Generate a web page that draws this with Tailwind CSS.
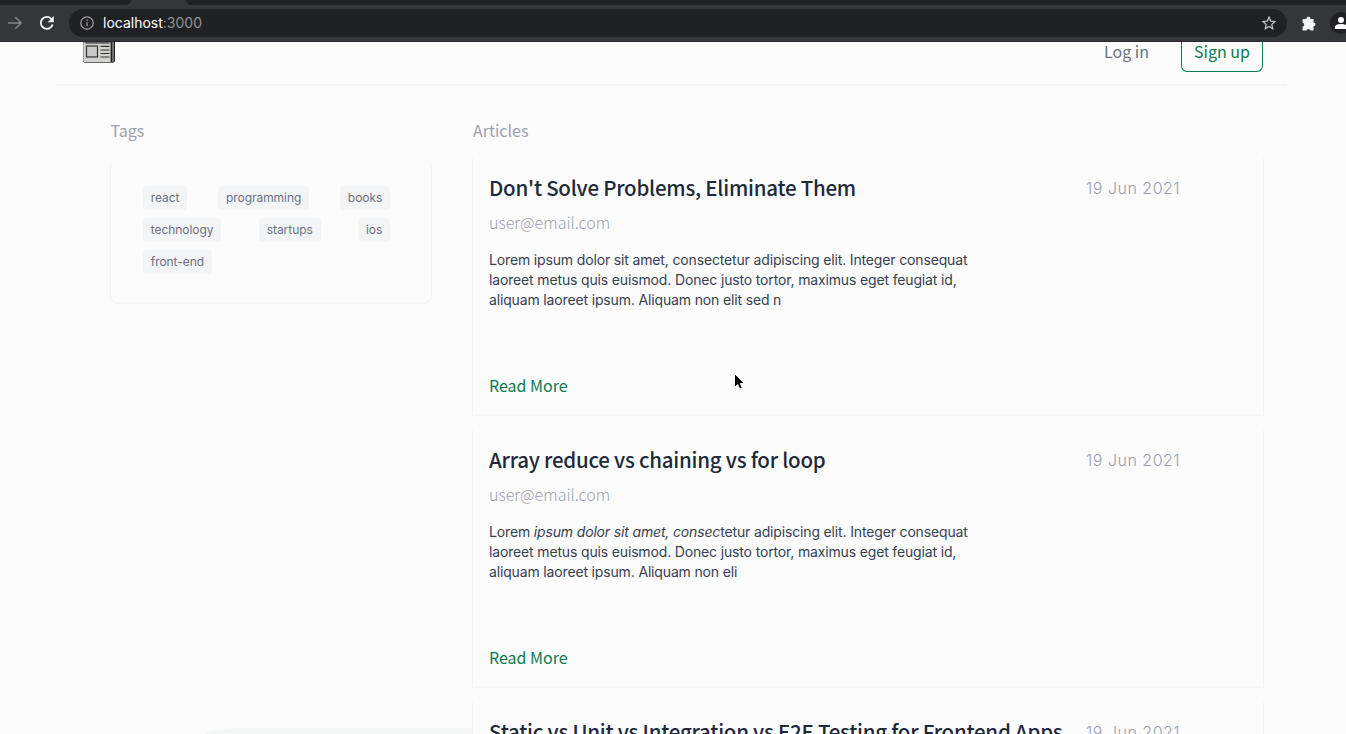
<!DOCTYPE html>
<html lang="en">
<head>
<meta charset="utf-8">
<title>Articles</title>
<script src="https://cdn.jsdelivr.net/npm/@tailwindcss/browser@4"></script>
</head>
<body class="flex h-[734px] w-[1346px] flex-col overflow-hidden bg-[#fcfcfc] font-['Inter',sans-serif]">
<div class="relative flex h-[42px] shrink-0 flex-col border-b border-[#28292c] bg-[#35363a]">
  <div class="flex h-[5px] w-full justify-between">
    <div class="h-full w-[131px] rounded-br-[5px] bg-[#202124]"></div>
    <div class="h-full w-[1160px] rounded-bl-[5px] bg-[#202124]"></div>
  </div>
  <div class="flex h-[36px] items-center">
    <svg class="ml-[7px] size-4 shrink-0" viewBox="0 0 16 16" fill="none" stroke="#85868a" stroke-width="1.5"><path d="M1 8h13M8.3 2.2 14.1 8l-5.8 5.800"/></svg>
    <svg class="ml-[16px] size-4 shrink-0" viewBox="0 0 16 16" fill="none" stroke="#f1f3f4" stroke-width="1.9"><path d="M13.600 9.400A6 6 0 1 1 12.400 4"/><path d="M14.800 1v6.200H8.600z" fill="#f1f3f4" stroke="none"/></svg>
    <div class="ml-[14px] flex h-7 w-[1218px] shrink-0 items-center rounded-full bg-[#202124] pr-[11px] pl-[11px]">
      <svg class="size-[14px]" viewBox="0 0 14 14" fill="none" stroke="#9aa0a6" stroke-width="1.300"><circle cx="7" cy="7" r="6.200"/><path d="M7 6.200v4M7 3.500v1.500"/></svg>
      <div class="ml-[9px] text-[14px] leading-5 text-[#8f9195]"><span class="text-white">localhost</span>:3000</div>
      <svg class="ml-auto size-[14px]" viewBox="0 0 14 14" fill="none" stroke="#c4c7ca" stroke-width="1.200"><path d="m7 1.100 1.700 4 4.300.4-3.200 2.900.9 4.300L7 10.500l-3.700 2.200.9-4.300L1 5.500l4.300-.4z"/></svg>
    </div>
    <svg class="ml-[15px] size-[15px] shrink-0" viewBox="0 0 15 15" fill="#f1f3f4"><path d="M1.500 3h3.100a1.900 1.900 0 1 1 3.700 0h3.200v3.400a1.900 1.900 0 1 1 0 3.800v4.300H8.600a2.200 2.200 0 0 0-4.200 0H.6v-3.700a2.100 2.100 0 0 0 0-4.100V4q0-1 .9-1z"/></svg>
    <div class="ml-[13px] flex size-[22px] shrink-0 items-center justify-center rounded-full bg-[#202124]">
      <svg class="size-3" viewBox="0 0 12 12" fill="#fff"><circle cx="6" cy="3" r="3"/><path d="M0 12v-2q0-3 6-3t6 3v2z"/></svg>
    </div>
  </div>
</div>

<div class="relative h-[692px] w-full shrink-0 overflow-hidden">
  <header class="mx-auto ml-[56px] flex h-[44px] w-[1231px] items-start border-b-2 border-[#f3f4f5] pr-[24px] pl-[27px] font-['Noto_Sans_CJK_SC',sans-serif] text-[16px]">
    <svg class="h-[21px] w-8" viewBox="0 0 32 21"><path d="M28 0h4v19l-2 2h-3z" fill="#777"/><path d="M0 0h28v20.500H1.500L0 19z" fill="#d2d2d0" stroke="#666" stroke-width="1"/><path d="M28.500 0v20" stroke="#222" stroke-width="1.300"/><path d="M31.500 0v19l-1.500 1.500" fill="none" stroke="#222"/><path d="M2.500 1h24" stroke="#444" stroke-width="1.300"/><rect x="3.500" y="4" width="11" height="11" fill="#c9c9c9" stroke="#333" stroke-width="1.200"/><path d="M17.500 4.300h9M17.500 8h9M17.500 11.500h9M17.500 15h9" stroke="#333" stroke-width="1.200"/></svg>
    <span class="-mt-px ml-auto h-5 w-[45px] leading-5 whitespace-nowrap text-gray-500">Log in</span>
    <div class="ml-[32px] flex h-[30px] w-[82px] justify-center rounded-b-[6px] border border-t-0 border-[#0b7a52] leading-[18px] whitespace-nowrap text-[#0b7a52]">Sign up</div>
  </header>

  <div class="flex">
    <aside class="ml-[110px] w-[322px] pt-[32px]">
      <h2 class="h-6 pl-[0.5px] font-['Noto_Sans_CJK_SC',sans-serif] text-[16px] leading-6 text-gray-400">Tags</h2>
      <div class="mt-[18px] h-[144px] rounded-[8px] border border-t-0 border-b-2 border-[#f4f4f5] px-8 pt-[26px] text-[12px] tracking-[-0.05px] text-gray-500">
        <div class="flex w-[247px] flex-col gap-2 leading-6">
          <div class="flex justify-between"><span class="h-6 rounded bg-gray-100 px-[7.75px]">react</span><span class="h-6 rounded bg-gray-100 px-[7.75px]">programming</span><span class="h-6 rounded bg-gray-100 px-[7.75px]">books</span></div>
          <div class="flex justify-between"><span class="h-6 rounded bg-gray-100 px-[7.75px]">technology</span><span class="h-6 rounded bg-gray-100 px-[7.75px]">startups</span><span class="h-6 rounded bg-gray-100 px-[7.75px]">ios</span></div>
          <div class="flex"><span class="h-6 rounded bg-gray-100 px-[7.75px]">front-end</span></div>
        </div>
      </div>
    </aside>
    <main class="ml-[40px] w-[792px] pt-[32px]">
      <h2 class="ml-px h-6 font-['Noto_Sans_CJK_SC',sans-serif] text-[16px] leading-6 text-gray-400">Articles</h2>
      <div class="mt-[16px] flex flex-col gap-4">
        <article class="h-[258px] -mb-0.5 border border-t-0 border-b-2 border-[#f4f4f5] px-4 pt-[13px]">
          <div class="flex h-8 items-center whitespace-nowrap"><h3 class="w-[597px] font-['Noto_Sans_CJK_SC',sans-serif] text-[20.500px] tracking-[-0.240px] font-medium text-gray-800">Don't Solve Problems, Eliminate Them</h3><span class="pt-px text-[16px] font-light tracking-[0.5px] text-gray-400">19 Jun 2021</span></div>
          <div class="mt-[7px] h-6 font-['Noto_Sans_CJK_SC',sans-serif] text-[16px] leading-6 font-light text-gray-400">user@email.com</div>
          <p class="mt-[16px] h-[100px] text-[14px] leading-5 tracking-[-0.15px] whitespace-nowrap text-gray-700">Lorem ipsum dolor sit amet, consectetur adipiscing elit. Integer consequat<br>laoreet metus quis euismod. Donec justo tortor, maximus eget feugiat id,<br>aliquam laoreet ipsum. Aliquam non elit sed n</p>
          <a class="mt-[23px] block h-6 font-['Noto_Sans_CJK_SC',sans-serif] text-[16px] leading-6 text-[#0b7a52]">Read More</a>
        </article>
        <article class="h-[258px] -mb-0.5 border border-t-0 border-b-2 border-[#f4f4f5] px-4 pt-[13px]">
          <div class="flex h-8 items-center whitespace-nowrap"><h3 class="w-[597px] font-['Noto_Sans_CJK_SC',sans-serif] text-[20.500px] tracking-[-0.240px] font-medium text-gray-800">Array reduce vs chaining vs for loop</h3><span class="pt-px text-[16px] font-light tracking-[0.5px] text-gray-400">19 Jun 2021</span></div>
          <div class="mt-[7px] h-6 font-['Noto_Sans_CJK_SC',sans-serif] text-[16px] leading-6 font-light text-gray-400">user@email.com</div>
          <p class="mt-[16px] h-[100px] text-[14px] leading-5 tracking-[-0.155px] whitespace-nowrap text-gray-700">Lorem <em>ipsum dolor sit amet, consec</em>tetur adipiscing elit. Integer consequat<br>laoreet metus quis euismod. Donec justo tortor, maximus eget feugiat id,<br>aliquam laoreet ipsum. Aliquam non eli</p>
          <a class="mt-[23px] block h-6 font-['Noto_Sans_CJK_SC',sans-serif] text-[16px] leading-6 text-[#0b7a52]">Read More</a>
        </article>
        <article class="h-[258px] -mb-0.5 border border-t-0 border-b-2 border-[#f4f4f5] px-4 pt-[13px]">
          <div class="flex h-8 items-center whitespace-nowrap"><h3 class="w-[597px] font-['Noto_Sans_CJK_SC',sans-serif] text-[20.500px] tracking-[-0.240px] font-medium text-gray-800">Static vs Unit vs Integration vs E2E Testing for Frontend Apps</h3><span class="pt-px text-[16px] font-light tracking-[0.5px] text-gray-400">19 Jun 2021</span></div>
        </article>
      </div>
    </main>
  </div>
  <div class="absolute top-[686px] left-[205px] h-[6px] w-[267px] rounded-tl-[40px_6px] bg-[#f5f6f6]"></div>
  <svg class="absolute top-[329px] left-[732px] h-5 w-[14px]" viewBox="0 0 14 20"><path d="M2.500 2.500v14l3.200-3 2 4.600 2.600-1.100-2-4.500h4.200z" fill="#000" stroke="#fff" stroke-width="1"/></svg>
</div>
</body>
</html>
